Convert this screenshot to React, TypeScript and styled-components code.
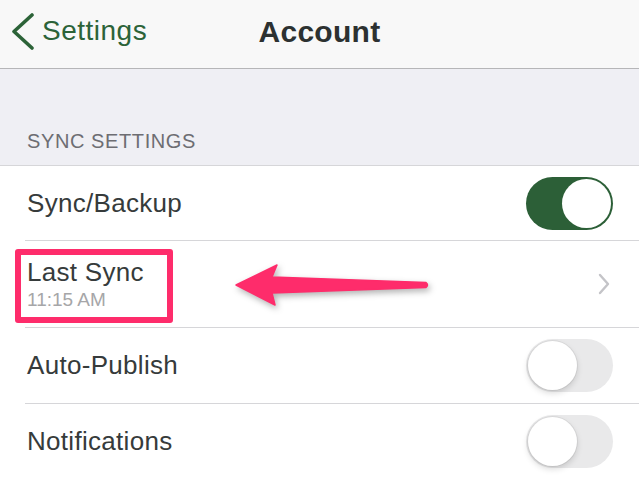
import { FC } from 'react';
import styled, { createGlobalStyle } from 'styled-components';

const GlobalStyle = createGlobalStyle`
  html, body {
    margin: 0;
    padding: 0;
    background: #ffffff;
    overflow: hidden;
  }
  * {
    box-sizing: border-box;
  }
`;

interface ToggleProps {
  on?: boolean;
}

const Toggle: FC<ToggleProps> = ({ on }) => (
  <Track $on={on}>
    <Knob $on={on} />
  </Track>
);

const BackIcon = () => (
  <svg width="24" height="38" viewBox="0 0 24 38">
    <polyline
      points="21,3 3,19.5 21,36"
      fill="none"
      stroke="#2c6338"
      strokeWidth="3.6"
      strokeLinecap="round"
      strokeLinejoin="round"
    />
  </svg>
);

const Chevron = () => (
  <svg width="14" height="22" viewBox="0 0 14 22">
    <polyline
      points="3,2 11,11 3,20"
      fill="none"
      stroke="#c4c4c8"
      strokeWidth="2.4"
      strokeLinecap="round"
      strokeLinejoin="round"
    />
  </svg>
);

const ArrowIcon = () => (
  <svg width="210" height="60" viewBox="0 0 210 60">
    <path
      d="M6 30 L47 10 L42 22 L196 27.5 Q199 30 196 32.5 L42 38 L45 50 Z"
      fill="#fe2c6b"
      stroke="#fe2c6b"
      strokeWidth="1.5"
      strokeLinejoin="round"
    />
  </svg>
);

const App: FC = () => {
  return (
    <Page>
      <GlobalStyle />
      <NavBar>
        <BackButton>
          <BackIcon />
          <BackLabel>Settings</BackLabel>
        </BackButton>
        <Title>Account</Title>
        <span />
      </NavBar>

      <SectionHeader>SYNC SETTINGS</SectionHeader>

      <List>
        <Row $height={74}>
          <Label>Sync/Backup</Label>
          <Toggle on />
        </Row>
        <Row $height={86}>
          <LabelGroup>
            <Label>Last Sync</Label>
            <SubLabel>11:15 AM</SubLabel>
          </LabelGroup>
          <ChevronWrap>
            <Chevron />
          </ChevronWrap>
          <Highlight />
          <Arrow>
            <ArrowIcon />
          </Arrow>
        </Row>
        <Row $height={75}>
          <Label>Auto-Publish</Label>
          <Toggle />
        </Row>
        <Row $height={75}>
          <Label>Notifications</Label>
          <Toggle />
        </Row>
      </List>
    </Page>
  );
};

const Page = styled.div`
  width: 639px;
  height: 477px;
  overflow: hidden;
  display: flex;
  flex-direction: column;
  background: #efeff4;
  font-family: 'Liberation Sans', Arial, sans-serif;

  & > * {
    flex-shrink: 0;
  }
`;

const NavBar = styled.header`
  display: grid;
  grid-template-columns: 1fr auto 1fr;
  align-items: center;
  height: 69px;
  padding: 0 0 5px 11px;
  background: #f8f8f8;
  border-bottom: 1px solid #b6b6b8;
`;

const BackButton = styled.div`
  display: flex;
  align-items: center;
  gap: 7px;
  margin-top: -2px;
`;

const BackLabel = styled.span`
  font-size: 28px;
  letter-spacing: 0.5px;
  color: #2c6338;
`;

const Title = styled.h1`
  margin: 0 0 0 -11px;
  font-size: 30px;
  font-weight: 700;
  letter-spacing: 0.3px;
  color: #2c3131;
`;

const SectionHeader = styled.div`
  height: 97px;
  display: flex;
  align-items: flex-end;
  padding: 0 0 12px 27px;
  font-size: 20px;
  letter-spacing: 0.6px;
  color: #6d6d72;
  border-bottom: 1px solid #d6d6d9;
`;

const List = styled.div`
  flex: 1 0 auto;
  background: #ffffff;
  padding-left: 25px;
`;

const Row = styled.div<{ $height: number }>`
  position: relative;
  display: flex;
  align-items: center;
  justify-content: space-between;
  height: ${({ $height }) => $height + 1}px;
  padding: 0 26px 0 2px;
  border-bottom: 1px solid #d6d6d9;
`;

const LabelGroup = styled.div`
  display: flex;
  flex-direction: column;
`;

const Label = styled.span`
  font-size: 26px;
  letter-spacing: 0.3px;
  color: #363b3b;
`;

const SubLabel = styled.span`
  font-size: 19px;
  color: #a6a6a8;
  margin-top: 1px;
`;

const ChevronWrap = styled.span`
  display: flex;
  margin-right: 2px;
`;

const Highlight = styled.div`
  position: absolute;
  left: -10px;
  top: 8px;
  width: 158px;
  height: 74px;
  border: 6px solid #fe2c6b;
  border-radius: 3px;
  pointer-events: none;
`;

const Arrow = styled.div`
  position: absolute;
  left: 205px;
  top: 14px;
  display: flex;
  filter: drop-shadow(2px 3px 3px rgba(0, 0, 0, 0.3));
  pointer-events: none;
`;

const Track = styled.span<{ $on?: boolean }>`
  display: flex;
  align-items: center;
  justify-content: ${({ $on }) => ($on ? 'flex-end' : 'flex-start')};
  width: 87px;
  height: 53px;
  padding: 2px;
  border-radius: 27px;
  background: ${({ $on }) => ($on ? '#2c5f37' : '#e9e9ea')};
`;

const Knob = styled.span<{ $on?: boolean }>`
  width: 49px;
  height: 49px;
  border-radius: 50%;
  background: #ffffff;
  box-shadow: ${({ $on }) =>
    $on
      ? 'none'
      : '0 3px 6px rgba(0, 0, 0, 0.15), 0 0 0 1px rgba(0, 0, 0, 0.06)'};
`;

export default App;
